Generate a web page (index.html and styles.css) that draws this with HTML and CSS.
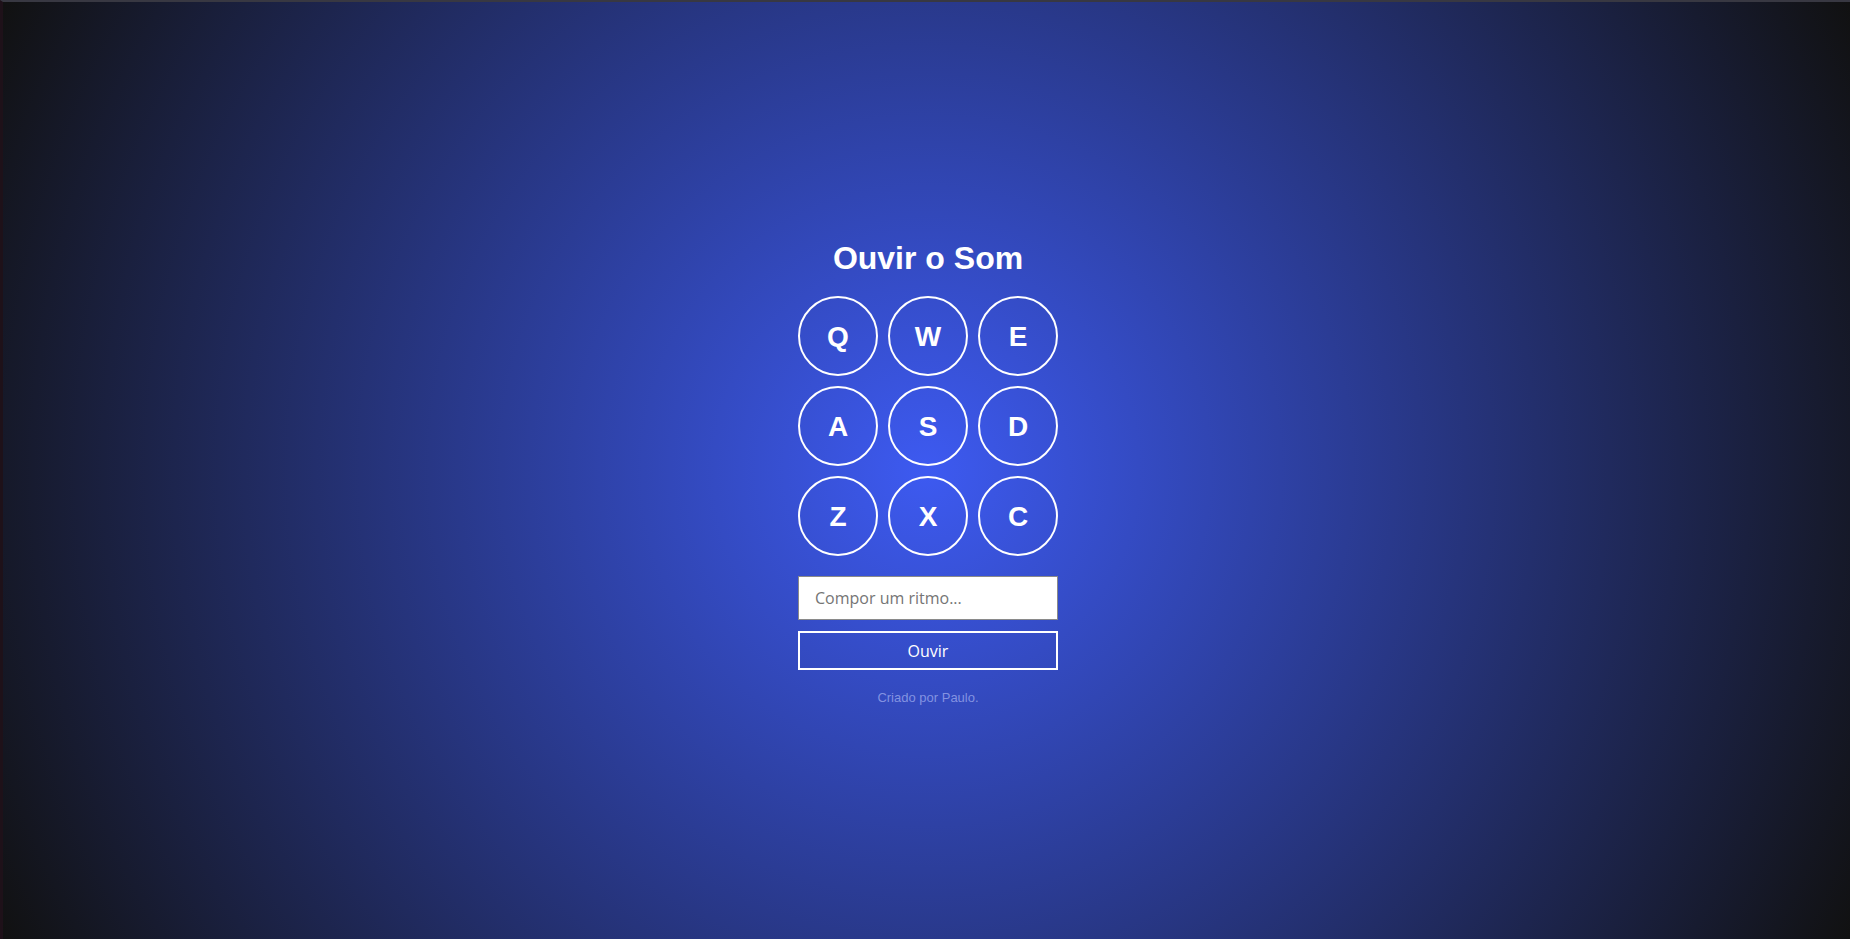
FILE: index.html
```html
<!DOCTYPE html>
<html lang="pt">
<head>
<meta charset="utf-8">
<title>Ouvir o Som</title>
<link rel="stylesheet" href="styles.css">
</head>
<body>
<div class="page">
  <main class="app">
    <h1 class="title">Ouvir o Som</h1>
    <div class="pads">
      <button class="pad">Q</button>
      <button class="pad">W</button>
      <button class="pad">E</button>
      <button class="pad">A</button>
      <button class="pad">S</button>
      <button class="pad">D</button>
      <button class="pad">Z</button>
      <button class="pad">X</button>
      <button class="pad">C</button>
    </div>
    <input class="rhythm" type="text" placeholder="Compor um ritmo...">
    <button class="play">Ouvir</button>
    <p class="credit">Criado por Paulo.</p>
  </main>
</div>
</body>
</html>
```

FILE: styles.css
```css
html, body {
  margin: 0;
  padding: 0;
}

.page {
  box-sizing: border-box;
  height: 100vh;
  border-top: 2px solid #383842;
  border-left: 3px solid #1e1119;
  background: radial-gradient(circle, #3d5af1, #111111);
  display: flex;
  align-items: center;
  justify-content: center;
  font-family: "Liberation Sans", Arial, sans-serif;
  color: #ffffff;
}

.app {
  width: 260px;
  display: flex;
  flex-direction: column;
  align-items: stretch;
  margin-left: 3px;
  margin-top: 4px;
}

.title {
  margin: 0 0 19px;
  font-size: 32px;
  font-weight: bold;
  text-align: center;
  line-height: normal;
}

.pads {
  display: grid;
  grid-template-columns: repeat(3, 80px);
  grid-auto-rows: 80px;
  gap: 10px;
}

.pad {
  box-sizing: border-box;
  width: 80px;
  height: 80px;
  border: 2px solid #ffffff;
  border-radius: 50%;
  background: transparent;
  color: #ffffff;
  font-family: "Liberation Sans", Arial, sans-serif;
  font-weight: bold;
  font-size: 28px;
  padding: 2px 0 0;
  display: flex;
  align-items: center;
  justify-content: center;
}

.rhythm {
  box-sizing: border-box;
  margin-top: 20px;
  height: 44px;
  width: 260px;
  border: 1px solid #8a8a8a;
  background: #ffffff;
  padding: 0 16px;
  font-family: "Open Sans", sans-serif;
  font-size: 16px;
  color: #333333;
  outline: none;
}

.rhythm::placeholder {
  color: #757575;
}

.play {
  box-sizing: border-box;
  margin-top: 11px;
  height: 39px;
  width: 260px;
  border: 2px solid #ffffff;
  background: transparent;
  color: #ffffff;
  font-family: "Open Sans", sans-serif;
  font-size: 16px;
  padding: 0;
}

.credit {
  margin: 20px 0 0;
  font-size: 13px;
  text-align: center;
  color: rgba(200, 210, 255, 0.55);
}
```
